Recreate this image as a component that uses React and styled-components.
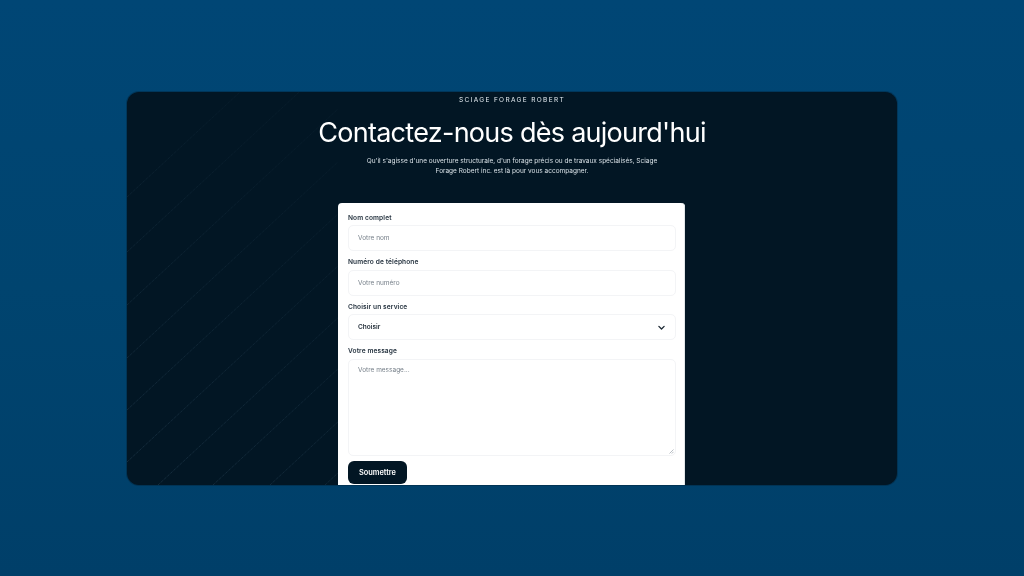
import React from 'react'
import styled, { createGlobalStyle } from 'styled-components'

const Global = createGlobalStyle`
  html, body { margin: 0; height: 100%; }
  body { font-family: "Inter", "Liberation Sans", sans-serif; background: #00446f; }
  * { box-sizing: border-box; }
`

const Page = styled.div`
  width: 1024px;
  height: 576px;
  padding: 92px 127px 91px;
  background: linear-gradient(180deg, #004675 0%, #00446f 50%, #003f69 100%);
  overflow: hidden;
`

const Panel = styled.section`
  position: relative;
  height: 393px;
  border-radius: 12px;
  background: #021624;
  box-shadow: 0 0 0 1px rgba(2, 22, 36, 0.3);
  overflow: hidden;
  display: flex;
  flex-direction: column;
  align-items: center;
  padding-top: 4px;
  will-change: transform;
`

const Lines = styled.svg`
  position: absolute;
  left: 0;
  top: 0;
  pointer-events: none;
`

const Brand = styled.p`
  position: relative;
  margin: 0;
  font-size: 6.5px;
  line-height: 8px;
  letter-spacing: 1.35px;
  color: #e6edf2;
`

const Title = styled.h1`
  position: relative;
  margin: 11.5px 0 0;
  font-size: 27px;
  line-height: 34px;
  font-weight: 400;
  letter-spacing: -0.73px;
  color: #fff;
`

const Intro = styled.p`
  position: relative;
  margin: 7.5px 0 0;
  width: 300px;
  text-align: center;
  font-size: 6.5px;
  line-height: 9.5px;
  color: #d8e0e6;
`

const Card = styled.form`
  position: relative;
  flex: none;
  margin: 27px 1px 0 0;
  width: 347px;
  border-radius: 4px 4px 0 0;
  background: #fff;
  box-shadow: inset -1px 0 0 #e2e6e9;
  padding: 10.5px 9px 10px 10px;
`

const Field = styled.div`
  display: flex;
  flex-direction: column;
  margin-bottom: 7px;

  &:last-of-type {
    margin-bottom: 5px;
  }
`

const Label = styled.label`
  font-size: 6.6px;
  line-height: 8px;
  font-weight: 600;
  letter-spacing: 0.1px;
  color: #1f2d3a;
  margin-bottom: 3.5px;
`

const Control = styled.div`
  height: 26px;
  border: 1px solid #f3f4f6;
  border-radius: 5px;
  padding: 0 9px;
  display: flex;
  align-items: center;
  justify-content: space-between;
  font-size: 6.5px;
  color: ${p => (p.$filled ? '#1c2833' : '#77808a')};
  font-weight: ${p => (p.$filled ? 600 : 400)};
`

const Area = styled.div`
  position: relative;
  height: 97px;
  border: 1px solid #f3f4f6;
  border-radius: 5px;
  padding: 6px 9px;
  font-size: 6.5px;
  line-height: 8px;
  color: #77808a;
`

const Grip = styled.svg`
  position: absolute;
  right: 1px;
  bottom: 1px;
`

const Submit = styled.button`
  display: block;
  width: 59px;
  height: 23px;
  border: 0;
  border-radius: 6px;
  background: #021624;
  color: #fff;
  font-family: inherit;
  font-size: 7.4px;
  font-weight: 600;
`

// starting points on the left / bottom edge of the panel, in panel coords
const diagonals = [
  [0, 105], [0, 160], [0, 213], [0, 266], [0, 318], [0, 370],
  [31, 393], [86, 393], [143, 393], [198, 393],
]

const App = () => (
  <Page>
    <Global />
    <Panel>
      <Lines width="211" height="393" viewBox="0 0 211 393">
        <defs>
          <linearGradient id="fade" gradientUnits="userSpaceOnUse" x1="0" y1="393" x2="210" y2="100">
            <stop offset="0" stopColor="#3d5d74" stopOpacity="0.75" />
            <stop offset="1" stopColor="#3d5d74" stopOpacity="0.2" />
          </linearGradient>
        </defs>
        {diagonals.map(([x, y], i) => (
          <line
            key={i}
            x1={x}
            y1={y}
            x2={x + 240}
            y2={y - 223}
            stroke="url(#fade)"
            strokeWidth="0.6"
            strokeDasharray="1 1"
          />
        ))}
      </Lines>
      <Brand>SCIAGE FORAGE ROBERT</Brand>
      <Title>Contactez-nous dès aujourd'hui</Title>
      <Intro>
        Qu'il s'agisse d'une ouverture structurale, d'un forage précis ou de travaux spécialisés, Sciage Forage
        Robert inc. est là pour vous accompagner.
      </Intro>
      <Card>
        <Field>
          <Label>Nom complet</Label>
          <Control>Votre nom</Control>
        </Field>
        <Field>
          <Label>Numéro de téléphone</Label>
          <Control>Votre numéro</Control>
        </Field>
        <Field>
          <Label>Choisir un service</Label>
          <Control $filled>
            Choisir
            <svg width="9" height="9" viewBox="0 0 24 24" fill="none" stroke="#1c2833" strokeWidth="3.5" strokeLinecap="round" strokeLinejoin="round">
              <path d="m5 9 7 7 7-7" />
            </svg>
          </Control>
        </Field>
        <Field>
          <Label>Votre message</Label>
          <Area>
            Votre message...
            <Grip width="5" height="5" viewBox="0 0 5 5" stroke="#9aa2aa" strokeWidth="0.7">
              <path d="M0.5 4.5 4.5 0.5M2.8 4.5 4.5 2.8" />
            </Grip>
          </Area>
        </Field>
        <Submit type="button">Soumettre</Submit>
      </Card>
    </Panel>
  </Page>
)

export default App
